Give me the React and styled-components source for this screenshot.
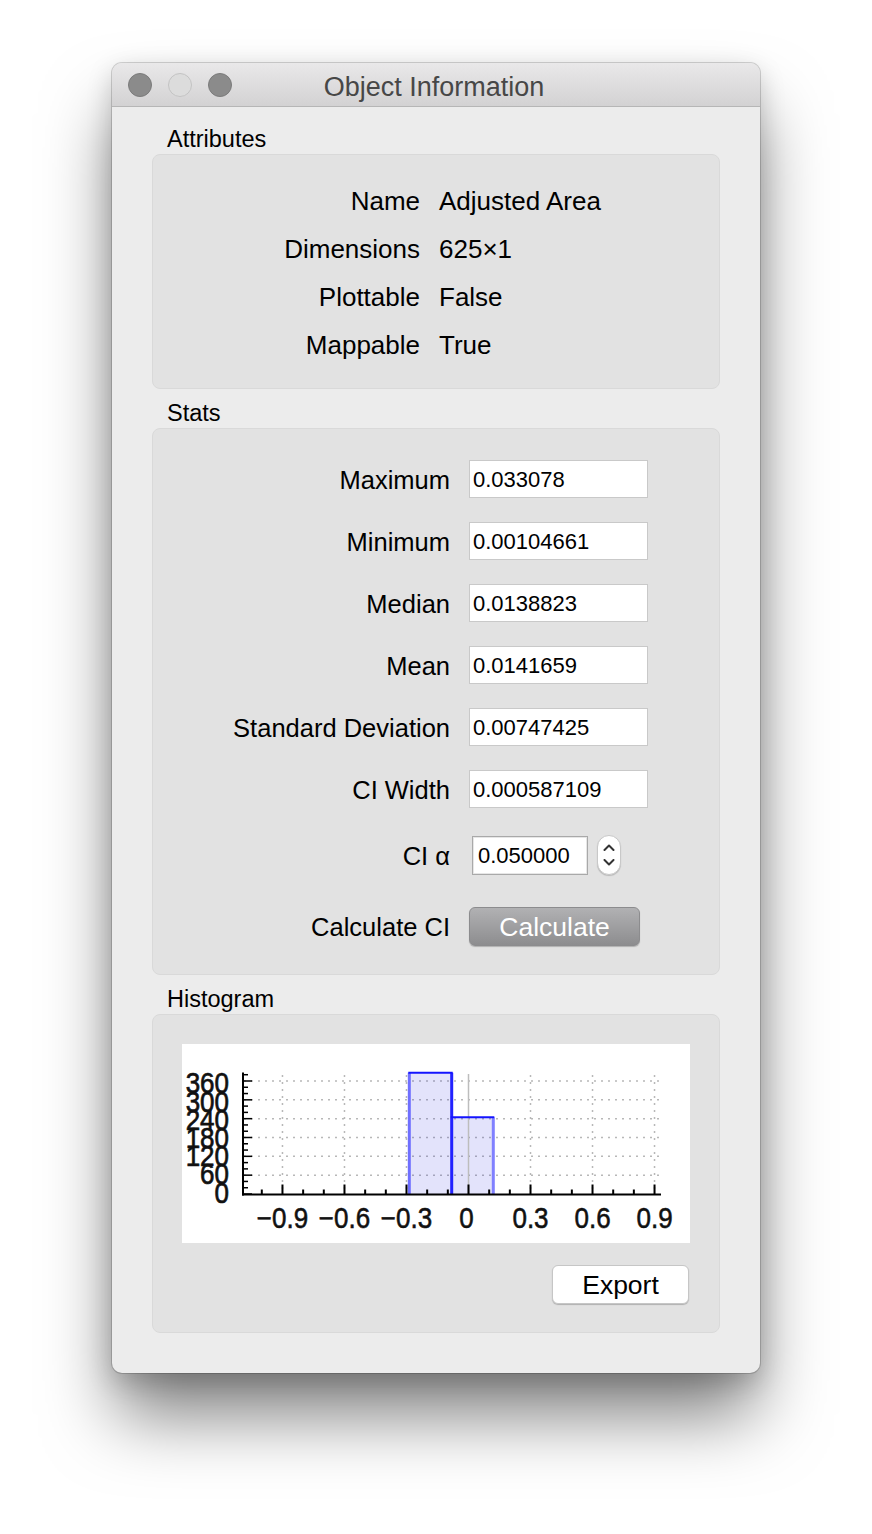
import styled, { createGlobalStyle } from "styled-components";

const GlobalStyle = createGlobalStyle`
  html, body {
    margin: 0;
    padding: 0;
    background: #ffffff;
  }
  body {
    font-family: "Liberation Sans", Arial, sans-serif;
    color: #000;
  }
`;

const Page = styled.div`
  width: 872px;
  height: 1534px;
  box-sizing: border-box;
  padding: 63px 0 0 112px;
  background: #ffffff;
  overflow: hidden;
`;

const Window = styled.div`
  width: 648px;
  height: 1310px;
  display: flex;
  flex-direction: column;
  background: #ececec;
  border-radius: 10px;
  overflow: hidden;
  box-shadow: 0 0 0 1px rgba(0, 0, 0, 0.16), 0 46px 70px -4px rgba(0, 0, 0, 0.5),
    0 8px 26px rgba(0, 0, 0, 0.18);
`;

const TitleBar = styled.div`
  height: 44px;
  box-sizing: border-box;
  display: grid;
  grid-template-columns: 1fr auto 1fr;
  align-items: center;
  background: linear-gradient(#e9e8e9, #d3d2d3);
  border-bottom: 1px solid #b6b6b6;
`;

const Lights = styled.div`
  display: flex;
  gap: 16px;
  padding-left: 16px;
`;

const Light = styled.span`
  width: 24px;
  height: 24px;
  box-sizing: border-box;
  border-radius: 50%;
  background: ${(p) => (p.$dim ? "#dcdcdc" : "#8b8b8b")};
  border: 1px solid ${(p) => (p.$dim ? "#c3c3c3" : "#7b7b7b")};
`;

const Title = styled.div`
  font-size: 27px;
  color: #474747;
  line-height: 40px;
  padding-top: 4px;
  margin-right: 4px;
`;

const Content = styled.div`
  display: flex;
  flex-direction: column;
  padding: 17px 40px 0;
`;

const SectionHeader = styled.div`
  font-size: 23.5px;
  line-height: 30px;
  height: 30px;
  padding-left: 15px;
  margin-top: ${(p) => p.$gap || 0}px;
`;

const Panel = styled.div`
  box-sizing: border-box;
  background: #e2e2e2;
  border: 1px solid #d9d9d9;
  border-radius: 8px;
  padding: ${(p) => p.$pad};
`;

const AttrGrid = styled.div`
  display: grid;
  grid-template-columns: 267px 1fr;
  grid-auto-rows: 48px;
  column-gap: 19px;
  align-items: center;
  font-size: 26px;
`;

const AttrLabel = styled.div`
  text-align: right;
`;

const StatRow = styled.div`
  display: flex;
  align-items: center;
  height: ${(p) => p.$h || 38}px;
  margin-top: ${(p) => p.$mt || 0}px;
`;

const StatLabel = styled.div`
  width: 297px;
  flex-shrink: 0;
  margin-right: 19px;
  text-align: right;
  font-size: 25.5px;
  padding-top: 2px;
`;

const Field = styled.input`
  box-sizing: border-box;
  width: ${(p) => p.$w || 179}px;
  height: ${(p) => p.$h || 38}px;
  margin: 0 0 0 ${(p) => p.$ml || 0}px;
  padding: 2px 0 0 ${(p) => p.$pl || 3}px;
  border: 1px solid ${(p) => (p.$bezel ? "#a9a9a9" : "#c9c9c9")};
  box-shadow: ${(p) => (p.$bezel ? "inset 0 0 0 1px #e6e6e6" : "none")};
  border-radius: 0;
  background: #fff;
  font-family: "Liberation Sans", Arial, sans-serif;
  font-size: 22px;
  color: #000;
  outline: none;
`;

const Stepper = styled.div`
  box-sizing: border-box;
  width: 24px;
  height: 40px;
  margin-left: 9px;
  display: flex;
  flex-direction: column;
  align-items: center;
  justify-content: center;
  gap: 8px;
  background: #fff;
  border: 1px solid #c8c8c8;
  border-radius: 12px;
  box-shadow: 0 1px 1px rgba(0, 0, 0, 0.18);
`;

const PushButton = styled.button`
  box-sizing: border-box;
  width: ${(p) => p.$w}px;
  height: 39px;
  padding: 1px 0 0;
  border-radius: 6px;
  font-family: "Liberation Sans", Arial, sans-serif;
  font-size: 26.5px;
  cursor: pointer;
  color: ${(p) => (p.$gray ? "#ffffff" : "#000000")};
  background: ${(p) =>
    p.$gray ? "linear-gradient(#b1b1b3, #8d8d8f)" : "#ffffff"};
  border: 1px solid ${(p) => (p.$gray ? "#8c8c8e" : "#c6c6c6")};
  box-shadow: 0 1px 1px rgba(0, 0, 0, 0.22);
`;

const ChartBox = styled.div`
  width: 508px;
  height: 199px;
  background: #ffffff;
`;

const ExportRow = styled.div`
  display: flex;
  justify-content: flex-end;
  margin-top: 22px;
  padding-right: 30px;
`;

const Chevron = ({ up }) => (
  <svg width="12" height="7" viewBox="0 0 12 7">
    <path
      d={up ? "M1.5 6 L6 1.5 L10.5 6" : "M1.5 1 L6 5.5 L10.5 1"}
      fill="none"
      stroke="#333"
      strokeWidth="2"
      strokeLinecap="round"
      strokeLinejoin="round"
    />
  </svg>
);

const xv = (v) => 286.5 + v * 206.7;
const yc = (c) => 150 - c * 0.3139;
const AXIS_Y = 150.5;

const Histogram = () => {
  const xMajor = [-0.9, -0.6, -0.3, 0, 0.3, 0.6, 0.9];
  const xTicks = [];
  for (let i = -10; i <= 9; i++) xTicks.push(i);
  const yTicks = [];
  for (let c = 0; c <= 380; c += 20) yTicks.push(c);
  const yLabels = [360, 300, 240, 180, 120, 60, 0];
  const bars = [
    { x0: 227.3, x1: 269.7, top: 28.7 },
    { x0: 269.7, x1: 311.3, top: 73.3 },
  ];

  return (
    <svg width="508" height="199" viewBox="0 0 508 199">
      {[60, 120, 180, 240, 300, 360].map((c) => (
        <line
          key={"h" + c}
          x1="62"
          x2="478"
          y1={yc(c)}
          y2={yc(c)}
          stroke="#b8b8b8"
          strokeWidth="1.5"
          strokeDasharray="2 5"
        />
      ))}
      {xMajor
        .filter((v) => v !== 0)
        .map((v) => (
          <line
            key={"v" + v}
            x1={xv(v)}
            x2={xv(v)}
            y1="31"
            y2={AXIS_Y}
            stroke="#b8b8b8"
            strokeWidth="1.5"
            strokeDasharray="2 5"
          />
        ))}
      {bars.map((b, i) => (
        <rect
          key={"b" + i}
          x={b.x0}
          y={b.top}
          width={b.x1 - b.x0}
          height={AXIS_Y - b.top}
          fill="rgba(0,0,220,0.11)"
        />
      ))}
      <line x1={xv(0)} x2={xv(0)} y1="30" y2={AXIS_Y} stroke="#bdbdbd" strokeWidth="1.5" />
      <line x1={bars[0].x0} x2={bars[0].x0} y1={bars[0].top} y2={AXIS_Y} stroke="#6f6fff" strokeWidth="3" />
      <line x1={bars[1].x1} x2={bars[1].x1} y1={bars[1].top} y2={AXIS_Y} stroke="#8080ff" strokeWidth="3" />
      <line x1={bars[0].x1} x2={bars[0].x1} y1={bars[0].top} y2={AXIS_Y} stroke="#2222ff" strokeWidth="3" />
      {bars.map((b, i) => (
        <line
          key={"t" + i}
          x1={b.x0 - 1}
          x2={b.x1 + 1}
          y1={b.top}
          y2={b.top}
          stroke="#1414ff"
          strokeWidth="2"
        />
      ))}
      <line x1="61" x2="61" y1="28.5" y2={AXIS_Y + 1} stroke="#000" strokeWidth="2" />
      <line x1="60" x2="479" y1={AXIS_Y} y2={AXIS_Y} stroke="#000" strokeWidth="2" />
      {yTicks.map((c) => (
        <line
          key={"yt" + c}
          x1="61"
          x2={c % 60 === 0 ? 70 : 66}
          y1={yc(c)}
          y2={yc(c)}
          stroke="#000"
          strokeWidth="1.5"
        />
      ))}
      {xTicks.map((i) => (
        <line
          key={"xt" + i}
          x1={xv(i / 10)}
          x2={xv(i / 10)}
          y1={AXIS_Y}
          y2={AXIS_Y - (i % 3 === 0 ? 10 : 5)}
          stroke="#000"
          strokeWidth="2"
        />
      ))}
      {yLabels.map((c) => (
        <text
          key={"yl" + c}
          transform={`translate(47 ${158.5 - c * 0.3033}) scale(1 1.15)`}
          textAnchor="end"
          fontFamily="Liberation Sans, Arial, sans-serif"
          fontSize="26"
          fill="#111"
          stroke="#111"
          strokeWidth="0.6"
        >
          {c}
        </text>
      ))}
      {xMajor.map((v) => (
        <text
          key={"xl" + v}
          transform={`translate(${xv(v) - (v === 0 ? 2 : 0)} 184) scale(1 1.1)`}
          textAnchor="middle"
          fontFamily="Liberation Sans, Arial, sans-serif"
          fontSize="26"
          fill="#111"
          stroke="#111"
          strokeWidth="0.5"
        >
          {v === 0 ? "0" : (v < 0 ? "\u2212" : "") + Math.abs(v).toFixed(1)}
        </text>
      ))}
    </svg>
  );
};

const attributes = [
  ["Name", "Adjusted Area"],
  ["Dimensions", "625×1"],
  ["Plottable", "False"],
  ["Mappable", "True"],
];

const stats = [
  ["Maximum", "0.033078"],
  ["Minimum", "0.00104661"],
  ["Median", "0.0138823"],
  ["Mean", "0.0141659"],
  ["Standard Deviation", "0.00747425"],
  ["CI Width", "0.000587109"],
];

export default function App() {
  return (
    <Page>
      <GlobalStyle />
      <Window>
        <TitleBar>
          <Lights>
            <Light />
            <Light $dim />
            <Light />
          </Lights>
          <Title>Object Information</Title>
          <div />
        </TitleBar>
        <Content>
          <SectionHeader>Attributes</SectionHeader>
          <Panel $pad="22px 0 19px">
            <AttrGrid>
              {attributes.map(([k, v]) => [
                <AttrLabel key={k}>{k}</AttrLabel>,
                <div key={k + "v"}>{v}</div>,
              ])}
            </AttrGrid>
          </Panel>

          <SectionHeader $gap={9}>Stats</SectionHeader>
          <Panel $pad="31px 0 28px">
            {stats.map(([k, v], i) => (
              <StatRow key={k} $mt={i === 0 ? 0 : 24}>
                <StatLabel>{k}</StatLabel>
                <Field readOnly value={v} />
              </StatRow>
            ))}
            <StatRow $h={42} $mt={26}>
              <StatLabel>CI α</StatLabel>
              <Field readOnly value="0.050000" $w={116} $h={39} $ml={3} $pl={5} $bezel />
              <Stepper>
                <Chevron up />
                <Chevron />
              </Stepper>
            </StatRow>
            <StatRow $h={39} $mt={31}>
              <StatLabel>Calculate CI</StatLabel>
              <PushButton $gray $w={171}>Calculate</PushButton>
            </StatRow>
          </Panel>

          <SectionHeader $gap={9}>Histogram</SectionHeader>
          <Panel $pad="29px 0 28px 29px">
            <ChartBox>
              <Histogram />
            </ChartBox>
            <ExportRow>
              <PushButton $w={137}>Export</PushButton>
            </ExportRow>
          </Panel>
        </Content>
      </Window>
    </Page>
  );
}
